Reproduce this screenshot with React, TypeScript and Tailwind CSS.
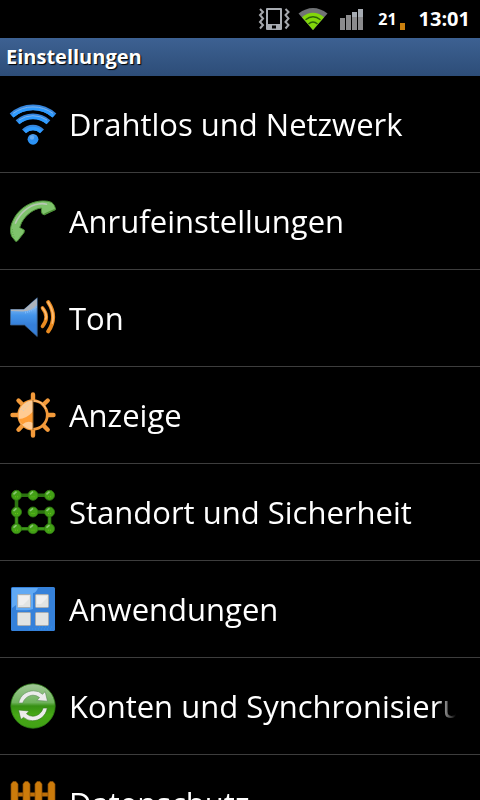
import React from 'react';

const WifiIcon = () => (
  <svg viewBox="0 0 48 48" className="size-12 shrink-0" fill="none" aria-hidden="true">
    <defs>
      <linearGradient id="wifi" x1="0" y1="0" x2="0" y2="1">
        <stop offset="0" stopColor="#5aa4f0" />
        <stop offset="0.3" stopColor="#2f8ff0" />
        <stop offset="1" stopColor="#2a95f8" />
      </linearGradient>
    </defs>
    <g strokeWidth="5.4">
      <path d="M2.5 15.6A32 32 0 0 1 45.5 15.6" stroke="#3585dd" />
      <path d="M8.5 22.3A23 23 0 0 1 39.5 22.3" stroke="#3585dd" />
      <path d="M15 31.4A12.3 12.3 0 0 1 33 31.4" stroke="#3585dd" />
    </g>
    <g strokeWidth="3.4">
      <path d="M3.5 16.2A31.4 31.4 0 0 1 44.5 16.2" stroke="#2e9bff" />
      <path d="M9.5 22.8A22.4 22.4 0 0 1 38.5 22.8" stroke="#2e9bff" />
      <path d="M15.8 31.8A11.7 11.7 0 0 1 32.2 31.8" stroke="#2e9bff" />
    </g>
    <path d="M4 13.4A34 34 0 0 1 44 13.4" stroke="#7db4ee" />
    <path d="M10 20A25 25 0 0 1 38 20" stroke="#7db4ee" />
    <circle cx="24" cy="39.3" r="5.4" fill="url(#wifi)" />
    <circle cx="23" cy="37.6" r="2.2" fill="#69acf2" />
  </svg>
);

const PhoneIcon = () => (
  <svg viewBox="0 0 48 48" className="size-12 shrink-0" fill="none" aria-hidden="true">
    <path
      d="M6.8 44.5L2.8 39.5C.8 35 1.2 29 3.8 24C8 14 17 7.4 26 5C31 3.6 38 3.4 42.3 5.3C45 7 46 9.5 46.6 12.6L35.4 17.8Q32.6 17.6 32.4 14.6L32.6 11C25 11.6 17 17.6 12.6 25.5L10.6 30.6L12.6 31.6L15.4 33.2L15 35.6L8.4 44Z"
      fill="#7fc36c"
      stroke="#4d9138"
      strokeWidth="1"
    />
    <path d="M35.5 17L45.6 12.5" stroke="#4d9138" strokeWidth="1.2" />
    <path d="M6.5 26C11 15.5 20 8.3 29.5 7Q34 6.2 37.5 7.2" stroke="#b8c7b5" strokeWidth="1.7" strokeLinecap="round" />
    <path d="M3.4 32Q3.4 38 6 41.5" stroke="#5ba744" strokeDasharray="1 1.5" />
  </svg>
);

const SoundIcon = () => (
  <svg viewBox="0 0 48 48" className="size-12 shrink-0" fill="none" aria-hidden="true">
    <defs>
      <linearGradient id="speaker" x1="0" y1="0" x2="0" y2="1">
        <stop offset="0.2" stopColor="#8bbdf3" />
        <stop offset="0.45" stopColor="#4595ea" />
        <stop offset="0.7" stopColor="#357fd9" />
      </linearGradient>
    </defs>
    <path d="M1.5 15.5H15L28.2 3.8V42.5L15.5 31H1.5Z" fill="url(#speaker)" stroke="#3d6391" strokeWidth=".8" />
    <path d="M15 15.5L27.8 4.5V12Q23 17 14 17.6L2 17V15.5Z" fill="#adb4bd" />
    <path d="M16 18.5Q23 17 27.5 12.5" stroke="#79b8fa" strokeWidth="2" strokeDasharray="1 1" />
    <g stroke="#e98a20" strokeLinecap="round">
      <path d="M33.5 14Q41 23 33.5 32.4" strokeWidth="3.6" />
      <path d="M39.2 8.2Q49 23 39.2 37.4" strokeWidth="4" />
    </g>
    <g stroke="#ffbc72" strokeLinecap="round" strokeWidth="1.8">
      <path d="M33.5 14Q38.5 20 36.8 25" />
      <path d="M39.2 8.2Q46 19 43.4 29" />
    </g>
  </svg>
);

const DisplayIcon = () => (
  <svg viewBox="0 0 48 48" className="size-12 shrink-0" fill="none" aria-hidden="true">
    <g stroke="#f39a3a" strokeWidth="4.4" strokeLinecap="round">
      <path d="M24 3.5V9M24 39V44.5M3.5 24H9M39 24H44.5" />
      <path d="M9.5 9.5L13.5 13.5M34.5 34.5L38.7 38.7M9.5 38.7L13.5 34.5M34.5 13.5L38.7 9.5" />
    </g>
    <circle cx="24" cy="24" r="14.3" fill="#000" stroke="#f39a3a" strokeWidth="2.8" />
    <path d="M24 9.5A14.5 14.5 0 0 0 24 38.5Z" fill="#ffcb93" />
    <path d="M10 28Q17 28 24 20.5V32Q18 29 13.4 33.6Q11 31 10 28Z" fill="#ff9d35" />
    <path d="M12 19L19 11M14 20L22 11.5" stroke="#d5cbbd" strokeDasharray="1.5 1.5" />
    <path d="M24 9.8Q34 9.8 37 18" stroke="#ffc78c" />
    <path d="M24 9V39" stroke="#8a5a22" />
  </svg>
);

const PATTERN_NODES = [
  [7.5, 7.3], [24, 7.3], [40.5, 7.3],
  [7.5, 24], [24, 24], [40.5, 24],
  [7.5, 40.7], [24, 40.7], [40.5, 40.7],
];

const SecurityIcon = () => (
  <svg viewBox="0 0 48 48" className="size-12 shrink-0" fill="none" aria-hidden="true">
    <path d="M40.5 7.3H7.5V40.7H40.5V24H24" stroke="#2c7410" strokeWidth="3.6" />
    <path d="M7.5 24V40.7H40.5V24" stroke="#3f9a1a" strokeWidth="2" />
    {PATTERN_NODES.map(([x, y]) => (
      <g key={`${x}-${y}`}>
        <circle cx={x} cy={y} r="5" fill="#43a016" stroke="#2f7a10" strokeWidth=".8" />
        <path d={`M${x - 3} ${y - 1}L${x} ${y - 3.6}`} stroke="#8cc977" strokeWidth="1.6" />
        <path d={`M${x - 1.5} ${y + 1.5}h4`} stroke="#64c314" strokeDasharray="1 1" />
      </g>
    ))}
  </svg>
);

const AppsIcon = () => (
  <svg viewBox="0 0 48 48" className="size-12 shrink-0" fill="none" aria-hidden="true">
    <rect x="2" y="2" width="44" height="44" rx="1.5" fill="#3581da" />
    <path d="M3 3H29Q27 8 24 8V24Q20 26 7 25V20L3 23Z" fill="#60a9f4" />
    <path d="M20 44H44M30 42H44" stroke="#2c96f5" strokeDasharray="1 2" />
    <g fill="#e2e4e3" stroke="#a7adb2" strokeWidth="1">
      <rect x="8.5" y="9.5" width="13" height="13" rx="1" />
      <rect x="26.5" y="9.5" width="13" height="13" rx="1" />
      <rect x="8.5" y="27.5" width="13" height="13" rx="1" />
      <rect x="26.5" y="27.5" width="13" height="13" rx="1" />
    </g>
    <path d="M10 11H20V14L14 20H10ZM28 11H38V13L32 19H28Z" fill="#efefef" />
  </svg>
);

const SyncIcon = () => (
  <svg viewBox="0 0 48 48" className="size-12 shrink-0" fill="none" aria-hidden="true">
    <defs>
      <linearGradient id="sync" x1="0" y1="0" x2="0" y2="1">
        <stop offset="0" stopColor="#a2c898" />
        <stop offset="0.42" stopColor="#6fb35c" />
        <stop offset="0.5" stopColor="#369012" />
        <stop offset="0.7" stopColor="#46a816" />
        <stop offset="1" stopColor="#41a015" />
      </linearGradient>
    </defs>
    <circle cx="24" cy="24" r="22.2" fill="url(#sync)" stroke="#2f7d17" strokeWidth=".8" />
    <path
      d="M9.7 21C11 13 18 8.8 24.5 8.8Q30 8.8 33.5 12.2L36.2 9.6L38.5 19.2L28 18.4L30.5 15.5Q27.5 13.2 24 13.2C19 13.4 15 17 13.8 21Z"
      fill="#ececec"
      stroke="#588950"
      strokeWidth=".6"
    />
    <path
      d="M38.3 26C37 34 30.5 38.8 23.5 38.8Q18.5 38.8 14.5 35.4L11.8 37.6L9.5 28L20.2 29L17.5 31.8Q20.5 34.4 24 34.2C29 34 33 30.5 34 26Z"
      fill="#ececec"
      stroke="#2f7518"
      strokeWidth=".6"
    />
  </svg>
);

const FenceIcon = () => (
  <svg viewBox="0 0 48 48" className="size-12 shrink-0" fill="none" aria-hidden="true">
    <path d="M2 15.5H46M2 34.5H46" stroke="#bd6e08" strokeWidth="4" />
    {[2, 14, 26, 39].map(x => (
      <path
        key={x}
        d={`M${x} 45V5L${x + 2} 2.5H${x + 5}L${x + 7} 5V45Z`}
        fill="#cc7b0b"
        stroke="#8a4d08"
        strokeWidth=".7"
      />
    ))}
  </svg>
);

const SETTINGS = [
  { label: 'Drahtlos und Netzwerk', icon: WifiIcon },
  { label: 'Anrufeinstellungen', icon: PhoneIcon },
  { label: 'Ton', icon: SoundIcon },
  { label: 'Anzeige', icon: DisplayIcon },
  { label: 'Standort und Sicherheit', icon: SecurityIcon },
  { label: 'Anwendungen', icon: AppsIcon },
  { label: 'Konten und Synchronisierung', icon: SyncIcon },
  { label: 'Datenschutz', icon: FenceIcon },
];

const StatusBar = () => (
  <div className="flex h-[38px] shrink-0 items-center justify-end bg-black pr-2.5 font-bold text-white">
    {/* Vibrate */}
    <svg width="32" height="24" viewBox="0 0 32 24" fill="none" className="mr-2" aria-label="Vibration">
      <path d="M2 2L5 5L2 8L5 11.5L2 15L5 18L2 21.5M27.5 2L30.5 5L27.5 8L30.5 11.5L27.5 15L30.5 18L27.5 21.5" stroke="#a5a8ad" strokeWidth="2" />
      <rect x="8" y="1" width="16" height="22" rx="1" fill="#a9adb3" />
      <rect x="10" y="3" width="12" height="14" fill="#000" />
      <rect x="14" y="18.5" width="4" height="3" fill="#000" />
    </svg>
    {/* Wi-Fi */}
    <svg width="30" height="24" viewBox="0 0 30 24" fill="none" className="mr-3" aria-label="WLAN">
      <path d="M0.5 6.5Q15 -4.5 29.5 6.5L15 23Z" fill="#707275" />
      <path d="M4 10.2Q15 1.5 26 10.2L15 23Z" fill="#82d70b" />
      <path d="M7.5 12.8Q15 6.5 22.5 12.8M10.5 17Q15 12.8 19.5 17" stroke="#2b6408" strokeWidth="1.4" />
    </svg>
    {/* Signal */}
    <svg width="24" height="24" viewBox="0 0 24 24" className="mr-3.5" aria-label="Signal">
      <path d="M0 11H5V23H0ZM6 8H11V23H6ZM12 5H17V23H12ZM18 2H23V23H18Z" fill="#8b8b8d" />
      <path d="M12 5H17V10H12ZM18 2H23V10H18Z" fill="#a6abb2" />
    </svg>
    <span className="text-base leading-6">21</span>
    <svg width="6" height="24" viewBox="0 0 6 24" className="ml-0.5 mr-3.5" aria-label="Akku">
      <path d="M1 16H6V23H1Z" fill="#cb800e" />
    </svg>
    <time className="text-xl leading-6">13:01</time>
  </div>
);

const App = () => {
  return (
    <div className="flex h-screen flex-col overflow-hidden bg-black font-['Open_Sans','Noto_Sans',sans-serif] text-white">
      <StatusBar />
      <header className="flex h-[38px] shrink-0 items-center bg-linear-to-b from-[#3d6192] to-[#2d4d78] px-1.5">
        <h1 className="text-xl font-bold leading-6 [text-shadow:1px_1px_1px_#000]">Einstellungen</h1>
      </header>
      <ul className="min-h-0 flex-1 overflow-y-auto [scrollbar-width:none]">
        {SETTINGS.map(({ label, icon: Icon }) => (
          <li key={label} className="border-b border-[#3d3d3d]">
            <button type="button" className="flex h-24 w-full items-center gap-3 pl-[9px] pr-6 text-left">
              <Icon />
              {/* long labels fade out at the right edge */}
              <span className="min-w-0 flex-1 overflow-hidden whitespace-nowrap text-[31px] leading-12 [mask-image:linear-gradient(to_right,black_calc(100%-20px),transparent)]">
                {label}
              </span>
            </button>
          </li>
        ))}
      </ul>
    </div>
  );
};

export default App;
